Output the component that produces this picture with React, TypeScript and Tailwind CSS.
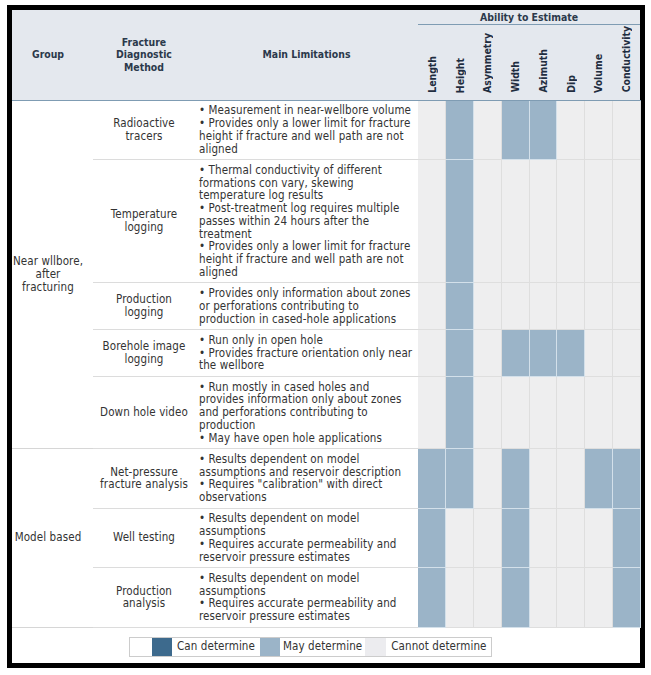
import React from "react";

// m = may determine, n = cannot determine
type Cell = "m" | "n";

const columnas = [
  "Length",
  "Height",
  "Asymmetry",
  "Width",
  "Azimuth",
  "Dip",
  "Volume",
  "Conductivity",
];

type Fila = {
  metodo: string[];
  limites: string[];
  celdas: Cell[];
};

const cercaPozo: Fila[] = [
  {
    metodo: ["Radioactive", "tracers"],
    limites: [
      "• Measurement in near-wellbore volume",
      "• Provides only a lower limit for fracture height if fracture and well path are not aligned",
    ],
    celdas: ["n", "m", "n", "m", "m", "n", "n", "n"],
  },
  {
    metodo: ["Temperature", "logging"],
    limites: [
      "• Thermal conductivity of different formations con vary, skewing temperature log results",
      "• Post-treatment log requires multiple passes within 24 hours after the treatment",
      "• Provides only a lower limit for fracture height if fracture and well path are not aligned",
    ],
    celdas: ["n", "m", "n", "n", "n", "n", "n", "n"],
  },
  {
    metodo: ["Production", "logging"],
    limites: [
      "• Provides only information about zones or perforations contributing to production in cased-hole applications",
    ],
    celdas: ["n", "m", "n", "n", "n", "n", "n", "n"],
  },
  {
    metodo: ["Borehole image", "logging"],
    limites: [
      "• Run only in open hole",
      "• Provides fracture orientation only near the wellbore",
    ],
    celdas: ["n", "m", "n", "m", "m", "m", "n", "n"],
  },
  {
    metodo: ["Down hole video"],
    limites: [
      "• Run mostly in cased holes and provides information only about zones and perforations contributing to production",
      "• May have open hole applications",
    ],
    celdas: ["n", "m", "n", "n", "n", "n", "n", "n"],
  },
];

const modelo: Fila[] = [
  {
    metodo: ["Net-pressure", "fracture analysis"],
    limites: [
      "• Results dependent on model assumptions and reservoir description",
      '• Requires "calibration" with direct observations',
    ],
    celdas: ["m", "m", "n", "m", "n", "n", "m", "m"],
  },
  {
    metodo: ["Well testing"],
    limites: [
      "• Results dependent on model assumptions",
      "• Requires accurate permeability and reservoir pressure estimates",
    ],
    celdas: ["m", "n", "n", "m", "n", "n", "n", "m"],
  },
  {
    metodo: ["Production", "analysis"],
    limites: [
      "• Results dependent on model assumptions",
      "• Requires accurate permeability and reservoir pressure estimates",
    ],
    celdas: ["m", "n", "n", "m", "n", "n", "n", "m"],
  },
];

function Celdas({ celdas }: { celdas: Cell[] }) {
  return (
    <>
      {celdas.map((c, i) => (
        <td
          key={i}
          className={
            c === "m"
              ? "border-r border-b border-[#d3e0ea] bg-[#9bb4c8]"
              : "border-r border-b border-[#dedede] bg-[#eeeeef]"
          }
        />
      ))}
    </>
  );
}

function Grupo({ nombre, filas }: { nombre: string[]; filas: Fila[] }) {
  return (
    <>
      {filas.map((f, idx) => (
        <tr key={idx}>
          {idx === 0 && (
            <td
              rowSpan={filas.length}
              className="border-b border-[#d6d6d6] pl-0 pr-[9px] text-center align-middle"
            >
              {nombre.map((n) => (
                <div key={n} className="whitespace-nowrap">
                  {n}
                </div>
              ))}
            </td>
          )}
          <td className="border-b border-[#dcdcdc] px-[1px] text-center align-middle">
            {f.metodo.map((m) => (
              <div key={m} className="whitespace-nowrap">
                {m}
              </div>
            ))}
          </td>
          <td className="border-b border-[#dcdcdc] pl-[4px] pr-[3px] py-[3.75px] align-middle">
            {f.limites.map((l, i) => (
              <div key={i}>{l}</div>
            ))}
          </td>
          <Celdas celdas={f.celdas} />
        </tr>
      ))}
    </>
  );
}

export default function App() {
  return (
    <div className="min-h-screen bg-white pl-[7px] pt-[5px] font-['DejaVu_Sans_Condensed','DejaVu_Sans',sans-serif] text-[11.5px] leading-[12.75px] tracking-[0.1px] text-[#333333]">
      <div className="h-[663px] w-[638px] border-[5px] border-black bg-white">
        <table className="w-[628px] table-fixed border-collapse">
          <colgroup>
            <col className="w-[81px]" />
            <col className="w-[102px]" />
            <col className="w-[223px]" />
            {columnas.map((c) => (
              <col key={c} className="w-[27.75px]" />
            ))}
          </colgroup>
          <thead className="bg-[#e4e8ee] text-[10.4px] font-bold tracking-normal text-[#2b394b]">
            <tr className="h-[14px]">
              <th rowSpan={2} className="border-b border-[#7f9cb3] pl-0 pr-[9px] text-center align-middle font-bold">
                Group
              </th>
              <th rowSpan={2} className="border-b border-[#7f9cb3] px-[3px] text-center align-middle font-bold">
                <div>Fracture</div>
                <div>Diagnostic</div>
                <div>Method</div>
              </th>
              <th rowSpan={2} className="border-b border-[#7f9cb3] text-center align-middle font-bold">
                Main Limitations
              </th>
              <th colSpan={8} className="border-b border-[#7f9cb3] pt-[1px] text-center font-bold leading-[12px]">
                Ability to Estimate
              </th>
            </tr>
            <tr className="h-[76px]">
              {columnas.map((c) => (
                <th key={c} className="border-b border-[#7f9cb3] p-0 pb-[4px] align-bottom">
                  <span className="inline-block rotate-180 font-bold leading-[12px] text-[#1f2d40] [writing-mode:vertical-rl]">
                    {c}
                  </span>
                </th>
              ))}
            </tr>
          </thead>
          <tbody>
            <Grupo nombre={["Near wllbore,", "after", "fracturing"]} filas={cercaPozo} />
            <Grupo nombre={["Model based"]} filas={modelo} />
          </tbody>
        </table>

        {/* Leyenda */}
        <div className="flex pl-[117px] pt-[9px]">
          <div className="flex h-[20px] items-center border border-[#cccccc] pr-[4px]">
            <div className="h-full w-[22px] bg-white" />
            <div className="h-full w-[20px] bg-[#3d6a8d]" />
            <span className="ml-[5px] mr-[5px]">Can determine</span>
            <div className="h-full w-[20px] bg-[#9bb4c8]" />
            <span className="ml-[3px] mr-[3px]">May determine</span>
            <div className="h-full w-[21px] bg-[#ececef]" />
            <span className="ml-[5px]">Cannot determine</span>
          </div>
        </div>
      </div>
    </div>
  );
}
